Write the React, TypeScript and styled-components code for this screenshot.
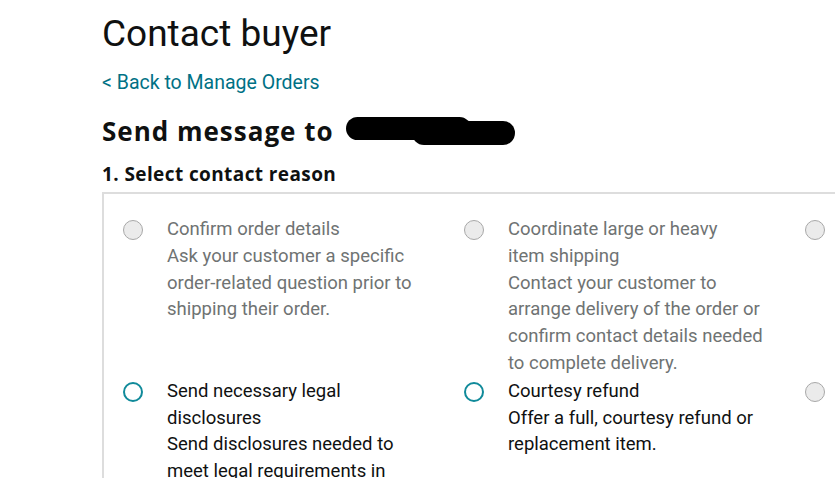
import React from "react";
import styled, { createGlobalStyle } from "styled-components";

const GlobalStyle = createGlobalStyle`
  html, body {
    margin: 0;
    padding: 0;
    background: #fff;
    overflow: hidden;
  }
  body {
    font-family: Roboto, "Liberation Sans", sans-serif;
    color: #0f1111;
  }
`;

const Page = styled.main`
  padding: 12px 0 0 102px;
  width: 1100px;
`;

const Title = styled.h1`
  margin: 0;
  font-size: 37px;
  font-weight: 400;
  line-height: 44px;
  color: #0f1111;
`;

const BackLink = styled.a`
  display: inline-block;
  margin-top: 14px;
  font-size: 19.5px;
  line-height: 26px;
  color: #007185;
  text-decoration: none;
`;

const Heading = styled.h2`
  display: flex;
  align-items: center;
  gap: 12px;
  margin: 18px 0 0;
  font-family: "Open Sans", Roboto, sans-serif;
  font-size: 26px;
  font-weight: 700;
  line-height: 34px;
  letter-spacing: 1px;
`;

const Step = styled.h3`
  margin: 13px 0 0;
  font-family: "Open Sans", Roboto, sans-serif;
  font-size: 19px;
  font-weight: 700;
  line-height: 26px;
  letter-spacing: 0.4px;
`;

const Options = styled.div`
  margin-top: 5px;
  border-top: 2px solid #dddddd;
  border-left: 2px solid #dddddd;
  padding: 22px 0 0 19px;
  display: grid;
  grid-template-columns: repeat(3, 341px);
  row-gap: 1px;
`;

const Option = styled.label`
  display: flex;
  gap: 24px;
  align-items: flex-start;
`;

const Radio = styled.span<{ $enabled: boolean }>`
  flex: none;
  box-sizing: border-box;
  width: 20px;
  height: 20px;
  margin-top: 4px;
  border-radius: 50%;
  border: ${(p) => (p.$enabled ? "2px solid #108a9a" : "1px solid #a8a8a8")};
  background: ${(p) => (p.$enabled ? "#fff" : "#ebebeb")};
`;

const OptionText = styled.div<{ $enabled: boolean }>`
  width: 255px;
  font-size: 18.5px;
  line-height: 26.8px;
  color: ${(p) => (p.$enabled ? "#0f1111" : "#6f7373")};
`;

const OptionTitle = styled.div`
  max-width: 240px;
`;

const Redacted = () => (
  <svg width="170" height="30" viewBox="0 0 170 30">
    <rect x="0" y="1" width="125" height="23" rx="11.5" fill="#000" />
    <rect x="66" y="5" width="103" height="24" rx="12" fill="#000" />
  </svg>
);

const options = [
  {
    title: "Confirm order details",
    body: "Ask your customer a specific order-related question prior to shipping their order.",
    enabled: false,
  },
  {
    title: "Coordinate large or heavy item shipping",
    body: "Contact your customer to arrange delivery of the order or confirm contact details needed to complete delivery.",
    enabled: false,
  },
  {
    title: "Schedule a delivery",
    body: "Contact your customer to schedule a delivery appointment.",
    enabled: false,
  },
  {
    title: "Send necessary legal disclosures",
    body: "Send disclosures needed to meet legal requirements in your marketplace.",
    enabled: true,
  },
  {
    title: "Courtesy refund",
    body: "Offer a full, courtesy refund or replacement item.",
    enabled: true,
  },
  {
    title: "Request a review",
    body: "Ask your customer to review the order.",
    enabled: false,
  },
];

export default function App() {
  return (
    <Page>
      <GlobalStyle />
      <Title>Contact buyer</Title>
      <BackLink href="#">&lt; Back to Manage Orders</BackLink>
      <Heading>
        Send message to <Redacted />
      </Heading>
      <Step>1. Select contact reason</Step>
      <Options>
        {options.map((o) => (
          <Option key={o.title}>
            <Radio $enabled={o.enabled} />
            <OptionText $enabled={o.enabled}>
              <OptionTitle>{o.title}</OptionTitle>
              {o.body}
            </OptionText>
          </Option>
        ))}
      </Options>
    </Page>
  );
}
